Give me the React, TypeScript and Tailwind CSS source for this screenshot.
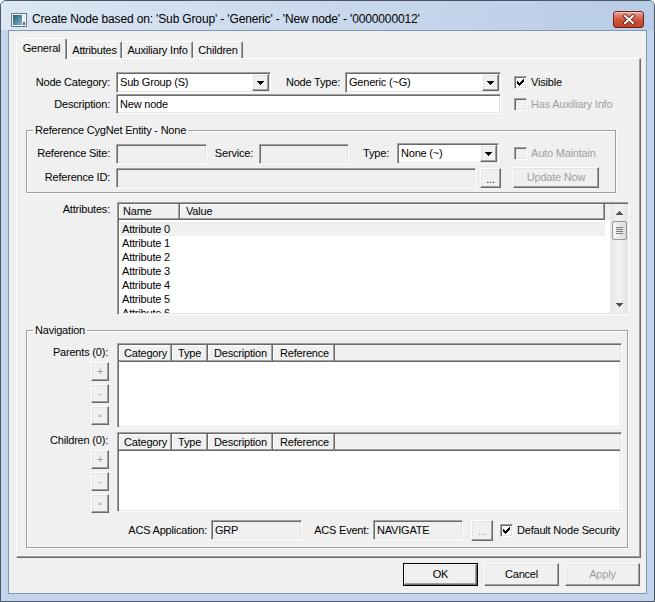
import React from "react";

const SUNKEN =
  "border border-t-[#a0a0a0] border-l-[#a0a0a0] border-r-white border-b-white shadow-[inset_1px_1px_0_#696969,inset_-1px_-1px_0_#e3e3e3]";
const RAISED =
  "border border-t-white border-l-white border-r-[#696969] border-b-[#696969] shadow-[inset_-1px_-1px_0_#a0a0a0,inset_1px_1px_0_#e3e3e3]";

function DownArrow({ color = "#000" }: { color?: string }) {
  return (
    <svg width="7" height="4" viewBox="0 0 7 4" shapeRendering="crispEdges">
      <path d="M0 0h7v1H0zM1 1h5v1H1zM2 2h3v1H2zM3 3h1v1H3z" fill={color} />
    </svg>
  );
}

function UpArrow({ color = "#000" }: { color?: string }) {
  return (
    <svg width="7" height="4" viewBox="0 0 7 4" shapeRendering="crispEdges">
      <path d="M3 0h1v1H3zM2 1h3v1H2zM1 2h5v1H1zM0 3h7v1H0z" fill={color} />
    </svg>
  );
}

function Combo({ value, className }: { value: string; className: string }) {
  return (
    <div className={`h-[21px] bg-white flex p-px ${SUNKEN} ${className}`}>
      <div className="flex-1 pl-[2px] flex items-center whitespace-nowrap overflow-hidden">{value}</div>
      <div className={`w-[17px] h-[17px] bg-[#f0f0f0] flex items-center justify-center ${RAISED}`}>
        <DownArrow />
      </div>
    </div>
  );
}

function Edit({ value = "", className, disabled = false }: { value?: string; className: string; disabled?: boolean }) {
  return (
    <div
      className={`h-[20px] flex items-center pl-[3px] whitespace-nowrap overflow-hidden ${
        disabled ? "bg-[#f0f0f0]" : "bg-white"
      } ${SUNKEN} ${className}`}
    >
      {value}
    </div>
  );
}

function CheckBox({
  label,
  checked = false,
  disabled = false,
  className = "",
}: {
  label: string;
  checked?: boolean;
  disabled?: boolean;
  className?: string;
}) {
  return (
    <div className={`flex items-center ${className}`}>
      <div
        className={`w-[13px] h-[13px] flex items-center justify-center ${SUNKEN} ${
          disabled ? "bg-[#f0f0f0]" : "bg-white"
        }`}
      >
        {checked && (
          <svg width="7" height="7" viewBox="0 0 7 7" shapeRendering="crispEdges">
            <path
              d="M0 2h1v3H0zM1 3h1v3H1zM2 4h1v3H2zM3 3h1v3H3zM4 2h1v3H4zM5 1h1v3H5zM6 0h1v3H6z"
              fill="#000"
            />
          </svg>
        )}
      </div>
      <span className={`ml-[4px] whitespace-nowrap ${disabled ? "text-[#a0a0a0]" : ""}`}>{label}</span>
    </div>
  );
}

function Btn({
  children,
  className = "",
  disabled = false,
  isDefault = false,
}: {
  children: React.ReactNode;
  className?: string;
  disabled?: boolean;
  isDefault?: boolean;
}) {
  const face = (
    <div
      className={`w-full h-full flex items-center justify-center bg-[#f0f0f0] whitespace-nowrap ${RAISED} ${
        disabled ? "text-[#a0a0a0]" : ""
      }`}
    >
      {children}
    </div>
  );
  return isDefault ? (
    <div className={`border border-black ${className}`}>{face}</div>
  ) : (
    <div className={className}>{face}</div>
  );
}

function HeadCell({ label, w, pl }: { label: string; w: string; pl: string }) {
  return (
    <div
      className={`${w} ${pl} h-full shrink-0 flex items-center whitespace-nowrap border-r border-b border-r-[#696969] border-b-[#696969] shadow-[inset_-1px_-1px_0_#a0a0a0,inset_1px_1px_0_#fff]`}
    >
      {label}
    </div>
  );
}

function VScroll() {
  return (
    <div className="w-[17px] h-full shrink-0 flex flex-col items-center bg-linear-to-r from-[#e6e6e6] via-[#f2f2f2] to-[#e6e6e6] border-l border-l-[#ececec]">
      <div className="h-[17px] w-full flex items-center justify-center">
        <UpArrow color="#505050" />
      </div>
      <div className="w-[15px] h-[19px] rounded-[2px] border border-[#979797] bg-linear-to-r from-[#f6f6f6] to-[#dcdcdc] flex flex-col items-center justify-center gap-[1px]">
        <div className="w-[7px] h-px bg-[#7a7a7a]" />
        <div className="w-[7px] h-px bg-[#7a7a7a]" />
        <div className="w-[7px] h-px bg-[#7a7a7a]" />
        <div className="w-[7px] h-px bg-[#7a7a7a]" />
      </div>
      <div className="flex-1" />
      <div className="h-[17px] w-full flex items-center justify-center">
        <DownArrow color="#505050" />
      </div>
    </div>
  );
}

function NavList({ h }: { h: string }) {
  return (
    <div className={`ml-[8px] w-[505px] ${h} bg-white p-px ${SUNKEN}`}>
      <div className="h-[17px] flex bg-[#f0f0f0]">
        <HeadCell w="w-[53px]" pl="pl-[5px]" label="Category" />
        <HeadCell w="w-[36px]" pl="pl-[6px]" label="Type" />
        <HeadCell w="w-[65px]" pl="pl-[6px]" label="Description" />
        <HeadCell w="w-[62px]" pl="pl-[7px]" label="Reference" />
        <div className="flex-1 border-b border-b-[#696969] shadow-[inset_0_-1px_0_#a0a0a0]" />
      </div>
    </div>
  );
}

function NavButtons() {
  return (
    <div className="mt-[3px] flex flex-col gap-[3px] text-[#a0a0a0]">
      <Btn className="w-[18px] h-[19px]" disabled>
        <span className="text-[11px]">+</span>
      </Btn>
      <Btn className="w-[18px] h-[19px]" disabled>
        <span className="text-[10px]">-</span>
      </Btn>
      <Btn className="w-[18px] h-[19px]" disabled>
        <span className="text-[8px]">×</span>
      </Btn>
    </div>
  );
}

function Tab({ label, w, selected = false }: { label: string; w: string; selected?: boolean }) {
  return selected ? (
    <div
      className={`${w} h-[21px] -mb-px relative z-10 bg-[#f0f0f0] border-l border-t border-r border-l-white border-t-white border-r-[#696969] shadow-[inset_-1px_0_0_#a0a0a0] rounded-t-[2px] flex justify-center pt-[3px]`}
    >
      {label}
    </div>
  ) : (
    <div
      className={`${w} h-[17px] bg-[#f0f0f0] border-l border-t border-r border-l-white border-t-white border-r-[#696969] shadow-[inset_-1px_0_0_#a0a0a0] rounded-t-[2px] flex justify-center pt-[2px]`}
    >
      {label}
    </div>
  );
}

function WindowIcon() {
  return (
    <svg width="16" height="14" viewBox="0 0 16 14" shapeRendering="crispEdges">
      <defs>
        <linearGradient id="pane" x1="0" y1="0" x2="1" y2="1">
          <stop offset="0" stopColor="#1d5f7e" />
          <stop offset="1" stopColor="#7fb7c4" />
        </linearGradient>
      </defs>
      <rect x="0.5" y="0.5" width="15" height="13" fill="#eef1f4" stroke="#6b7785" />
      <rect x="2" y="2" width="9" height="10" fill="url(#pane)" />
      <rect x="12" y="9" width="2" height="3" fill="#5b6570" />
    </svg>
  );
}

function CloseButton() {
  return (
    <div className="w-[31px] h-[17px] rounded-[3px] border border-[#6b2419] bg-linear-to-b from-[#e8a496] via-[#d0563f] to-[#c23f27] shadow-[inset_0_1px_0_#f3c7bd] flex items-center justify-center">
      <svg width="14" height="11" viewBox="0 0 14 11">
        <path d="M3 2 L11 9 M11 2 L3 9" stroke="#5a1d14" strokeWidth="3.6" strokeLinecap="square" />
        <path d="M3 2 L11 9 M11 2 L3 9" stroke="#ffffff" strokeWidth="2" strokeLinecap="square" />
      </svg>
    </div>
  );
}

const GROUP =
  "border border-[#a0a0a0] shadow-[inset_1px_1px_0_#fff,1px_1px_0_#fff]";

export default function App() {
  const attrs = [0, 1, 2, 3, 4, 5, 6];
  return (
    <div className="w-[655px] h-[602px] flex flex-col bg-[#c2d5ec] border border-[#4a5666] rounded-t-[6px] overflow-hidden font-['Liberation_Sans',Arial,sans-serif] text-[11px] leading-[13px] tracking-[-0.2px] text-black">
      {/* title bar */}
      <div className="h-[29px] shrink-0 flex items-start bg-linear-to-r from-[#dce6f3] to-[#b7cce6]">
        <div className="ml-[10px] mt-[12px]">
          <WindowIcon />
        </div>
        <span className="ml-[5px] mt-[11px] text-[12px] leading-[15px] tracking-[-0.15px] whitespace-nowrap text-black">
          Create Node based on: 'Sub Group' - 'Generic' - 'New node' - '0000000012'
        </span>
        <div className="ml-auto mr-[10px] mt-[10px]">
          <CloseButton />
        </div>
      </div>

      {/* client */}
      <div className="mx-[7px] mb-[7px] flex-1 flex flex-col bg-[#f0f0f0] border border-[#8196b0]">
        <div className="ml-[7px] mt-[7px] h-[20px] flex items-end">
          <Tab label="General" w="w-[51px]" selected />
          <Tab label="Attributes" w="w-[55px]" />
          <Tab label="Auxiliary Info" w="w-[71px]" />
          <Tab label="Children" w="w-[50px]" />
        </div>

        <div className="ml-[7px] w-[625px] h-[500px] shrink-0 flex flex-col bg-[#f0f0f0] border border-t-white border-l-white border-r-[#696969] border-b-[#696969] shadow-[inset_-1px_-1px_0_#a0a0a0]">
          {/* node category / type */}
          <div className="mt-[13px] h-[21px] flex items-center">
            <span className="w-[93px] text-right">Node Category:</span>
            <Combo className="ml-[6px] w-[155px]" value="Sub Group (S)" />
            <span className="w-[69px] text-right">Node Type:</span>
            <Combo className="ml-[5px] w-[156px]" value="Generic (~G)" />
            <CheckBox className="ml-[13px]" checked label="Visible" />
          </div>

          {/* description */}
          <div className="mt-px h-[20px] flex items-center">
            <span className="w-[93px] text-right">Description:</span>
            <Edit className="ml-[6px] w-[385px]" value="New node" />
            <CheckBox className="ml-[13px]" disabled label="Has Auxiliary Info" />
          </div>

          {/* reference entity */}
          <fieldset className={`mt-[10px] ml-[9px] w-[590px] pb-[4px] ${GROUP}`}>
            <legend className="ml-[6px] px-[2px] leading-[13px]">Reference CygNet Entity - None</legend>
            <div className="mt-[6px] h-[21px] flex items-center">
              <span className="w-[83px] text-right">Reference Site:</span>
              <Edit className="ml-[6px] w-[91px]" disabled />
              <span className="w-[46px] text-right">Service:</span>
              <Edit className="ml-[6px] w-[90px]" disabled />
              <span className="w-[40px] text-right">Type:</span>
              <Combo className="ml-[8px] w-[102px]" value="None (~)" />
              <CheckBox className="ml-[15px]" disabled label="Auto Maintain" />
            </div>
            <div className="mt-[3px] h-[21px] flex items-center">
              <span className="w-[83px] text-right">Reference ID:</span>
              <Edit className="ml-[6px] w-[360px]" disabled />
              <Btn className="ml-[4px] w-[21px] h-[20px]">
                <span className="pt-[3px]">...</span>
              </Btn>
              <Btn className="ml-[12px] w-[86px] h-[21px]" disabled>
                Update Now
              </Btn>
            </div>
          </fieldset>

          {/* attributes */}
          <div className="mt-[9px] flex items-start">
            <span className="w-[93px] text-right pt-px">Attributes:</span>
            <div className={`ml-[7px] w-[512px] h-[113px] bg-white p-px flex ${SUNKEN}`}>
              <div className="flex-1 flex flex-col overflow-hidden">
                <div className="h-[16px] shrink-0 flex bg-[#f0f0f0]">
                  <HeadCell w="w-[61px]" pl="pl-[4px]" label="Name" />
                  <HeadCell w="w-[425px]" pl="pl-[6px]" label="Value" />
                  <div className="flex-1" />
                </div>
                <div className="pt-[2px] flex flex-col">
                  {attrs.map((i) => (
                    <div
                      key={i}
                      className={`ml-px mr-[5px] h-[14px] shrink-0 leading-[14px] pl-[2px] ${
                        i === 0 ? "bg-[#f0f0f0]" : ""
                      }`}
                    >
                      Attribute {i}
                    </div>
                  ))}
                </div>
              </div>
              <VScroll />
            </div>
          </div>

          {/* navigation */}
          <fieldset className={`mt-[9px] ml-[9px] w-[602px] pb-[7px] ${GROUP}`}>
            <legend className="ml-[6px] px-[2px] leading-[13px]">Navigation</legend>
            <div className="mt-[6px] flex items-start">
              <div className="w-[82px] flex flex-col items-end">
                <span className="mt-[3px] pr-px">Parents (0):</span>
                <NavButtons />
              </div>
              <NavList h="h-[85px]" />
            </div>
            <div className="mt-[4px] flex items-start">
              <div className="w-[82px] flex flex-col items-end">
                <span className="mt-[2px] pr-px">Children (0):</span>
                <NavButtons />
              </div>
              <NavList h="h-[80px]" />
            </div>
            <div className="mt-[7px] h-[20px] flex items-center">
              <span className="w-[180px] text-right">ACS Application:</span>
              <Edit className="ml-[4px] w-[91px]" value="GRP" disabled />
              <span className="w-[67px] text-right">ACS Event:</span>
              <Edit className="ml-[4px] w-[90px]" value="NAVIGATE" disabled />
              <Btn className="ml-[8px] w-[22px] h-[21px]" disabled>
                <span className="pt-[3px]">...</span>
              </Btn>
              <CheckBox className="ml-[7px]" checked label="Default Node Security" />
            </div>
          </fieldset>
        </div>

        {/* dialog buttons */}
        <div className="mt-[5px] pr-[6px] flex justify-end gap-[6px]">
          <Btn className="w-[75px] h-[23px]" isDefault>
            OK
          </Btn>
          <Btn className="w-[75px] h-[23px]">Cancel</Btn>
          <Btn className="w-[75px] h-[23px]" disabled>
            Apply
          </Btn>
        </div>
      </div>
    </div>
  );
}
